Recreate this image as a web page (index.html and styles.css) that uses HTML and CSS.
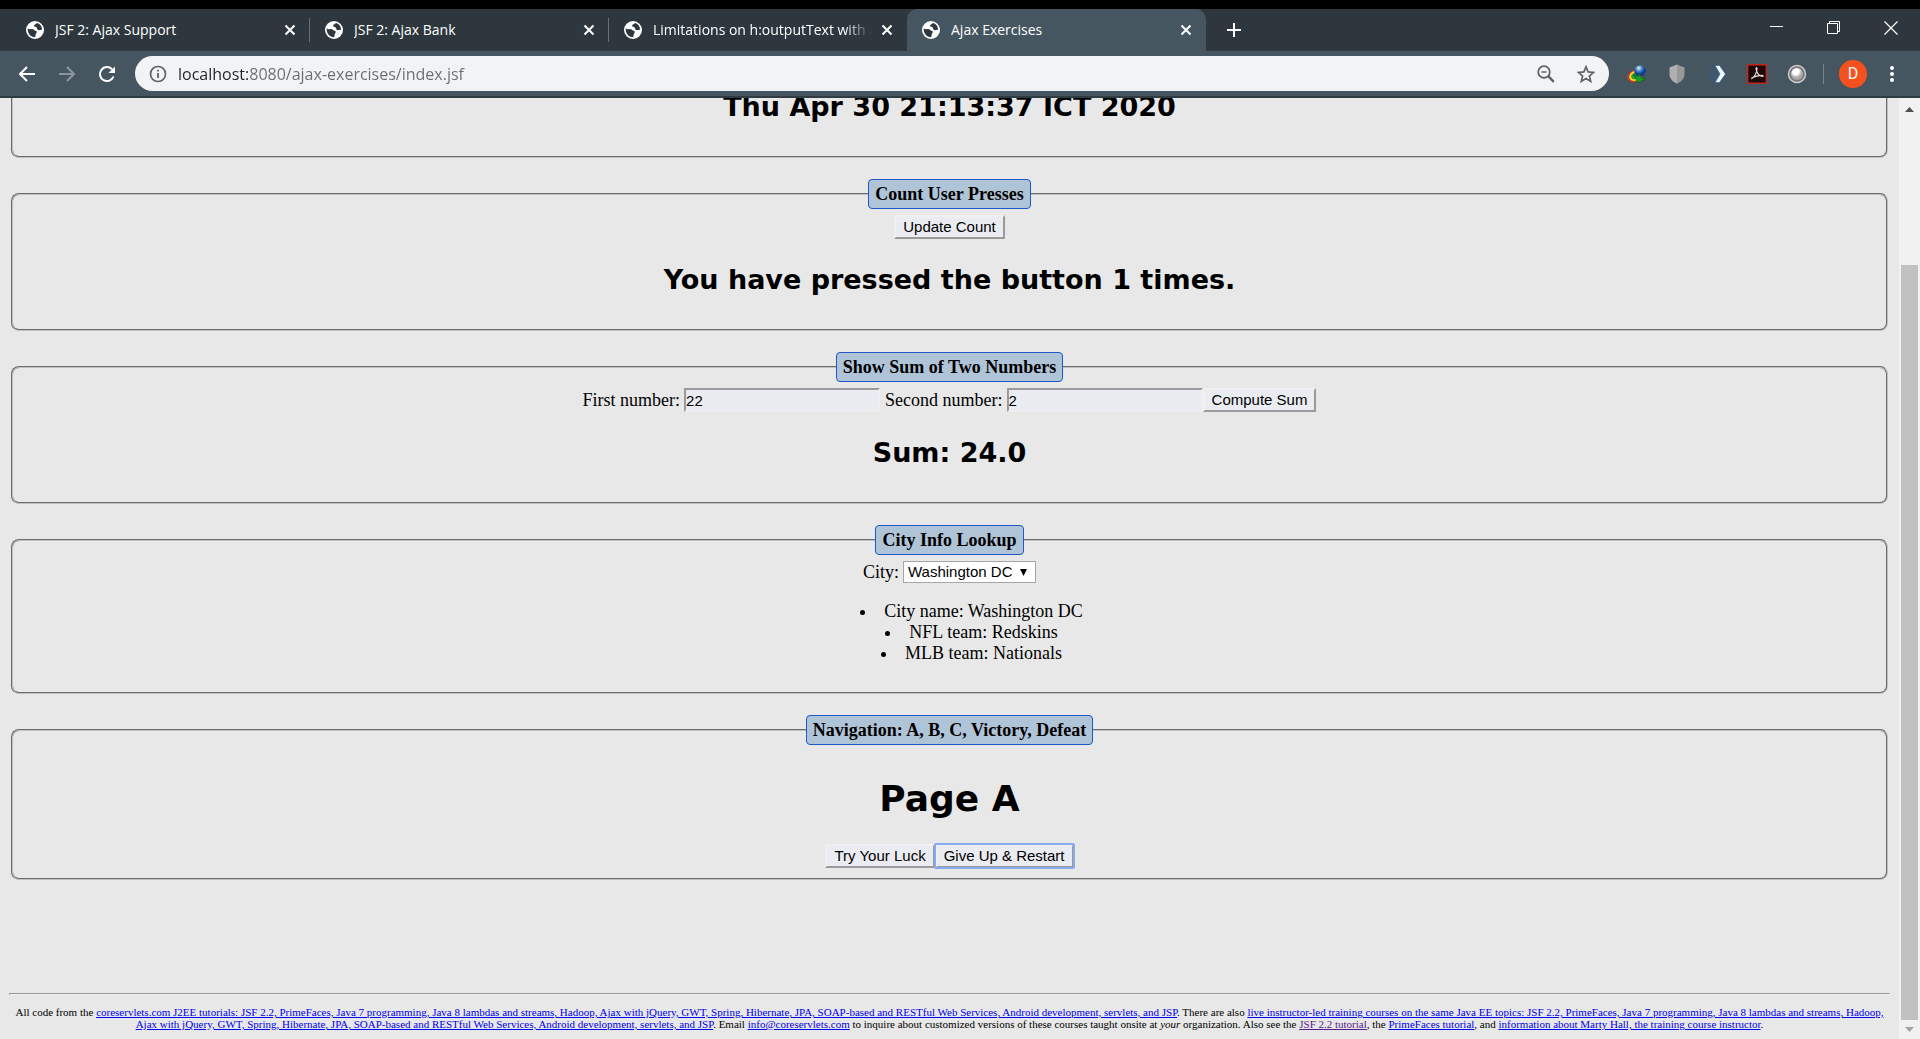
FILE: index.html
```html
<!DOCTYPE html>
<html lang="en">
<head>
<meta charset="utf-8">
<title>Ajax Exercises</title>
<link rel="stylesheet" href="styles.css">
</head>
<body>
<svg class="defs" width="0" height="0" aria-hidden="true">
  <symbol id="globe" viewBox="0 0 18 18">
    <circle cx="9" cy="9" r="9" fill="#fff"/>
    <path d="M1.800 7.200c1.200 1.200 2.600.9 4.200.9 1.700 0 2 1.500 3.400 1.700 1.600.2 1.700 1.500.8 2.400-.8.800-.4 2-1 4-4.700 0-8-4.200-7.400-9zM10.800 2.100c-.2 1.400-2.600 1.200-2.700 2.700 0 1.500 1.700 1 2.500 1.700.8.700.3 2 1.500 2.500 1.300.5 2.300-.5 4-.2-.1-3.400-2.100-6-5.300-6.700z" fill="#2d373d"/>
  </symbol>
  <symbol id="cross" viewBox="0 0 16 16">
    <path d="M3.500 3.500l9 9M12.500 3.500l-9 9" stroke="#fff" stroke-width="2" fill="none"/>
  </symbol>
</svg>

<header class="browser">
  <div class="tabstrip">
    <div class="tab"><svg class="favicon"><use href="#globe"/></svg><span class="tab-title">JSF 2: Ajax Support</span><button class="icon-btn" aria-label="Close tab"><svg width="16" height="16"><use href="#cross"/></svg></button></div>
    <div class="tab"><svg class="favicon"><use href="#globe"/></svg><span class="tab-title">JSF 2: Ajax Bank</span><button class="icon-btn" aria-label="Close tab"><svg width="16" height="16"><use href="#cross"/></svg></button></div>
    <div class="tab last"><svg class="favicon"><use href="#globe"/></svg><span class="tab-title fade">Limitations on h:outputText with Ajax</span><button class="icon-btn" aria-label="Close tab"><svg width="16" height="16"><use href="#cross"/></svg></button></div>
    <div class="tab active"><svg class="favicon"><use href="#globe"/></svg><span class="tab-title">Ajax Exercises</span><button class="icon-btn" aria-label="Close tab"><svg width="16" height="16"><use href="#cross"/></svg></button></div>
    <button class="icon-btn new-tab" aria-label="New tab"><svg width="16" height="16" viewBox="0 0 16 16"><path d="M8 1v14M1 8h14" stroke="#fff" stroke-width="2"/></svg></button>
    <div class="window-buttons">
      <button class="icon-btn" aria-label="Minimize"><svg width="14" height="14" viewBox="0 0 14 14"><path d="M0 5.500h13" stroke="#fff"/></svg></button>
      <button class="icon-btn" aria-label="Restore"><svg width="14" height="14" viewBox="0 0 14 14"><path d="M.5 2.500h10v10h-10zM2.500 2.500v-2h10v10h-2" stroke="#fff" fill="none"/></svg></button>
      <button class="icon-btn" aria-label="Close"><svg width="14" height="14" viewBox="0 0 14 14"><path d="M.5.5l13 13M13.500.5l-13 13" stroke="#fff" stroke-width="1.200"/></svg></button>
    </div>
  </div>
  <div class="toolbar">
    <div class="nav">
      <button class="icon-btn" aria-label="Back"><svg width="18" height="18" viewBox="0 0 18 18"><path d="M17 9H2M9 2L2 9l7 7" stroke="#fff" stroke-width="2" fill="none"/></svg></button>
      <button class="icon-btn" aria-label="Forward"><svg width="18" height="18" viewBox="0 0 18 18"><path d="M1 9h15M9 2l7 7-7 7" stroke="#8b979d" stroke-width="2" fill="none"/></svg></button>
      <button class="icon-btn" aria-label="Reload"><svg width="18" height="18" viewBox="0 0 18 18"><path d="M15.500 11.500A7 7 0 1 1 14 4.200" stroke="#fff" stroke-width="2" fill="none"/><path d="M17 1.500v6.500h-6.500z" fill="#fff"/></svg></button>
    </div>
    <div class="omnibox">
      <svg width="18" height="18" viewBox="0 0 18 18"><circle cx="9" cy="9" r="7.500" stroke="#5f6368" stroke-width="1.700" fill="none"/><path d="M9 8v5M9 4.800v1.800" stroke="#5f6368" stroke-width="1.800"/></svg>
      <input class="url" type="text" aria-label="Address" value="localhost:8080/ajax-exercises/index.jsf">
      <button class="icon-btn" aria-label="Zoom"><svg width="18" height="18" viewBox="0 0 18 18"><circle cx="7" cy="7" r="5.800" stroke="#5f6368" stroke-width="1.800" fill="none"/><path d="M4.500 7h5" stroke="#5f6368" stroke-width="1.500"/><path d="M11.200 11.200l5.600 5.600" stroke="#5f6368" stroke-width="2.400"/></svg></button>
      <button class="icon-btn" aria-label="Bookmark"><svg width="18" height="18" viewBox="0 0 18 18"><path d="M9 1.800l2.100 5.100 5.500.5-4.200 3.600 1.300 5.400L9 13.500l-4.700 2.900L5.600 11 1.400 7.400l5.500-.5z" stroke="#5f6368" stroke-width="1.700" fill="none"/></svg></button>
    </div>
    <div class="extensions">
      <button class="icon-btn" aria-label="Download manager"><svg width="20" height="20" viewBox="0 0 20 20"><defs><radialGradient id="gb" cx=".4" cy=".25"><stop offset="0" stop-color="#f4f6b0"/><stop offset=".5" stop-color="#4b8fe0"/><stop offset="1" stop-color="#123c8c"/></radialGradient></defs><ellipse cx="8" cy="12" rx="7" ry="5" transform="rotate(-25 8 12)" stroke="#d8331f" stroke-width="1.800" fill="none"/><ellipse cx="8.500" cy="12" rx="5.500" ry="4" transform="rotate(-25 8 12)" stroke="#f4d91e" stroke-width="2" fill="#2f9c3c"/><circle cx="13" cy="7" r="5.800" fill="url(#gb)"/><path d="M6.500 10.500l4 2.500 2.500-3 1 4 5 .5-8 4.500z" fill="#16a522" stroke="#0a5c12" stroke-width=".7"/></svg></button>
      <button class="icon-btn" aria-label="Shield"><svg width="20" height="20" viewBox="0 0 20 20"><path d="M10 .5l7.500 3v7c0 4-3 7-7.500 9.200z" fill="#989898"/><path d="M10 .5l-7.500 3v7c0 4 3 7 7.500 9.200z" fill="#b0b0b0"/></svg></button>
      <button class="icon-btn" aria-label="Arrow"><svg width="20" height="20" viewBox="0 0 20 20"><path d="M2 6h7M1 10h11M2 14h7" stroke="#2f5d94"/><path d="M8 1.500h4.500L18.500 10l-6 8.500H8L13 10z" fill="#f4faff" stroke="#2261ae" stroke-width=".7"/></svg></button>
      <button class="icon-btn" aria-label="Acrobat"><svg width="20" height="20" viewBox="0 0 20 20"><path d="M.7.700h18.600v18.600H.7z" fill="#1e0808" stroke="#c3281c" stroke-width="1.400"/><path d="M4 15c3-1 6-6 6-10.500 0-1.300-1.400-1-.9.600C9.800 8.500 12 12 15.500 12.500c1.200-.2.500-1.500-1.500-1.200C10 11.700 7 12.600 4.500 14" stroke="#e5dcdc" stroke-width="1.200" fill="none"/></svg></button>
      <button class="icon-btn" aria-label="Orb"><svg width="20" height="20" viewBox="0 0 20 20"><defs><radialGradient id="orb" cx=".4" cy=".3"><stop offset=".5" stop-color="#fff"/><stop offset="1" stop-color="#aaa"/></radialGradient></defs><circle cx="10" cy="10" r="8.500" fill="#777" stroke="#ccc" stroke-width="1.500"/><circle cx="10" cy="10" r="6" fill="url(#orb)"/></svg></button>
    </div>
    <button class="avatar" aria-label="Profile">D</button>
    <button class="icon-btn" aria-label="Menu"><svg width="6" height="18" viewBox="0 0 6 18"><g fill="#fff"><circle cx="3" cy="3" r="2"/><circle cx="3" cy="9" r="2"/><circle cx="3" cy="15" r="2"/></g></svg></button>
  </div>
</header>

<div class="viewport">
  <main class="page">
    <fieldset class="panel scrolled">
      <h2>Thu Apr 30 21:13:37 ICT 2020</h2>
    </fieldset>

    <fieldset class="panel">
      <legend>Count User Presses</legend>
      <div class="row"><button class="btn">Update Count</button></div>
      <h2>You have pressed the button 1 times.</h2>
    </fieldset>

    <fieldset class="panel">
      <legend>Show Sum of Two Numbers</legend>
      <div class="row">
        <label class="field">First number: <input class="num" type="text" value="22"></label>
        <label class="field second">Second number: <input class="num" type="text" value="2"></label>
        <button class="btn">Compute Sum</button>
      </div>
      <h2>Sum: 24.0</h2>
    </fieldset>

    <fieldset class="panel">
      <legend>City Info Lookup</legend>
      <div class="row city">
        <label class="field">City:
          <span class="select"><select><option>Washington DC</option></select><svg width="7" height="7" viewBox="0 0 7 7"><path d="M0 0h7L3.500 7z"/></svg></span>
        </label>
      </div>
      <ul>
        <li>City name: Washington DC</li>
        <li>NFL team: Redskins</li>
        <li>MLB team: Nationals</li>
      </ul>
    </fieldset>

    <fieldset class="panel">
      <legend>Navigation: A, B, C, Victory, Defeat</legend>
      <h1>Page A</h1>
      <div class="row"><button class="btn">Try Your Luck</button><button class="btn focused">Give Up &amp; Restart</button></div>
    </fieldset>

    <hr>
    <footer>All code from the <a href="#">coreservlets.com J2EE tutorials: JSF 2.2, PrimeFaces, Java 7 programming, Java 8 lambdas and streams, Hadoop, Ajax with jQuery, GWT, Spring, Hibernate, JPA, SOAP-based and RESTful Web Services, Android development, servlets, and JSP</a>. There are also <a href="#">live instructor-led training courses on the same Java EE topics: JSF 2.2, PrimeFaces, Java 7 programming, Java 8 lambdas and streams, Hadoop, Ajax with jQuery, GWT, Spring, Hibernate, JPA, SOAP-based and RESTful Web Services, Android development, servlets, and JSP</a>. Email <a href="#">info@coreservlets.com</a> to inquire about customized versions of these courses taught onsite at <i>your</i> organization. Also see the <a class="seen" href="#">JSF 2.2 tutorial</a>, the <a href="#">PrimeFaces tutorial</a>, and <a href="#">information about Marty Hall, the training course instructor</a>.</footer>
  </main>
  <div class="scrollbar" aria-hidden="true">
    <svg width="9" height="5" viewBox="0 0 9 5"><path d="M0 5L4.500 0 9 5z" fill="#505050"/></svg>
    <div class="track"><div class="thumb"></div></div>
    <svg width="9" height="5" viewBox="0 0 9 5"><path d="M0 0l4.500 5L9 0z" fill="#a3a3a3"/></svg>
  </div>
</div>
</body>
</html>
```
FILE: styles.css
```css
* { box-sizing: border-box; }

body {
  margin: 0;
  height: 100vh;
  display: flex;
  flex-direction: column;
  overflow: hidden;
  background: #e8e8e8;
  font: 18px/21px "Liberation Serif", serif;
  color: #000;
}

button, input, select { font: inherit; color: inherit; }
.defs { position: absolute; }

/* Browser frame */
.browser {
  flex: none;
  border-top: 9px solid #000;
  border-bottom: 2px solid #2f3c43;
  background: #2d373d;
  font-family: "Open Sans", "Noto Sans", sans-serif;
  color: #fff;
}

.icon-btn {
  display: flex;
  padding: 0;
  border: 0;
  background: none;
}

.tabstrip {
  display: flex;
  align-items: center;
  height: 42px;
  padding-left: 11px;
}

.tab {
  display: flex;
  align-items: center;
  gap: 11px;
  flex: 0 1 299px;
  min-width: 0;
  height: 42px;
  padding: 0 12px 0 15px;
  background: linear-gradient(#667177, #667177) right center / 1px 24px no-repeat;
  font-size: 14px;
  line-height: 20px;
}

.tab.last { background: none; flex-basis: 298px; }
.tab.active { background: #455660; border-radius: 10px 10px 0 0; }
.favicon { flex: none; width: 18px; height: 18px; }
.tab-title { flex: 1; min-width: 0; overflow: hidden; white-space: nowrap; }
.fade { margin-right: -8px; mask-image: linear-gradient(to right, #000 86%, transparent 98%); }
.new-tab { margin-left: 20px; }
.window-buttons { display: flex; gap: 43px; margin: 0 22px 4px auto; }

.toolbar {
  display: flex;
  align-items: center;
  height: 45px;
  padding: 0 25px 0 18px;
  background: #455660;
}

.nav { display: flex; gap: 22px; margin-right: 19px; }

.omnibox {
  flex: 1;
  display: flex;
  align-items: center;
  gap: 22px;
  height: 35px;
  padding: 0 14px;
  border-radius: 18px;
  background: #f1f3f4;
}

.url {
  flex: 1;
  min-width: 0;
  margin-left: -11px;
  padding: 0;
  border: 0;
  background: linear-gradient(to right, #202124 71px, #6a6d70 71px);
  background-clip: text;
  color: transparent;
  font-size: 16px;
  line-height: 24px;
}

.extensions {
  display: flex;
  gap: 20px;
  margin-left: 18px;
  padding-right: 17px;
  background: linear-gradient(#77848b, #77848b) right center / 1px 20px no-repeat;
}

.avatar {
  width: 28px;
  height: 28px;
  margin: 0 22px 0 15px;
  padding: 0;
  border: 0;
  border-radius: 50%;
  background: #f4511e;
  color: #fff;
  font-family: Roboto, sans-serif;
  font-size: 16px;
}

/* Page area, shown at the end of its scroll range */
.viewport { flex: 1; min-height: 0; display: flex; }

.page {
  flex: 1;
  min-width: 0;
  display: flex;
  flex-direction: column;
  justify-content: flex-end;
  overflow: hidden;
  padding: 0 9px 9px;
  text-align: center;
}

.panel {
  min-width: 0;
  margin: 0 2px 21px;
  padding: 6px 14px 10px;
  border: 2px groove #c0c0c0;
  border-radius: 8px;
}

.scrolled { border-top: 0; border-radius: 0 0 8px 8px; }

legend {
  margin: 0 auto;
  padding: 4px 6px;
  border: 1px solid #1c58c8;
  border-radius: 4px;
  background: #b0c4d8;
  font-weight: bold;
  line-height: 20px;
}

h1, h2 { font-family: "DejaVu Sans", Verdana, sans-serif; font-weight: bold; }
h1 { margin: 27px 0 24px; font-size: 36px; line-height: 42px; }
h2 { margin: 25px 0 23px; font-size: 27px; line-height: 32px; }

.row { display: flex; justify-content: center; align-items: center; height: 24px; }
.row.city { height: 22px; }
.field { display: flex; align-items: center; gap: 4px; }
.second { margin-left: 5px; }

.btn, .num {
  height: 24px;
  border: 2px solid;
  border-color: #f0f0f0 #9a9a9a #9a9a9a #f0f0f0;
  background: #eaecf2;
  font: 15px/18px "Liberation Sans", Arial, sans-serif;
}

.btn { padding: 0 7px; }
.focused { outline: 2px solid #84aaf0; outline-offset: -1px; border-radius: 1px; }
.num { width: 196px; padding: 0; border-color: #9a9a9a #eee #eee #9a9a9a; }

.select { display: flex; align-items: center; }
.select svg { margin-left: -16px; margin-right: 9px; pointer-events: none; }

select {
  appearance: none;
  width: 133px;
  height: 22px;
  padding: 0 4px;
  border: 1px solid #a6a6a6;
  background: #fff;
  font: 15px/18px "Liberation Sans", Arial, sans-serif;
}

ul { margin: 18px 0; padding: 0 0 0 44px; list-style-position: inside; }

hr { width: 100%; margin: 92px 0 11px; border: 1px solid; border-color: #9a9a9a #eee #eee #9a9a9a; }

footer { margin: 0 -5px; font-size: 11px; line-height: 12px; }
a { color: #00e; }
a.seen { color: #551a8b; }

.scrollbar {
  flex: none;
  display: flex;
  flex-direction: column;
  align-items: center;
  width: 21px;
  padding: 9px 0 7px;
  background: #f1f1f1;
}

.track { flex: 1; align-self: stretch; padding: 153px 2px 7px; display: flex; }
.thumb { flex: 1; background: #c1c1c1; }
```
